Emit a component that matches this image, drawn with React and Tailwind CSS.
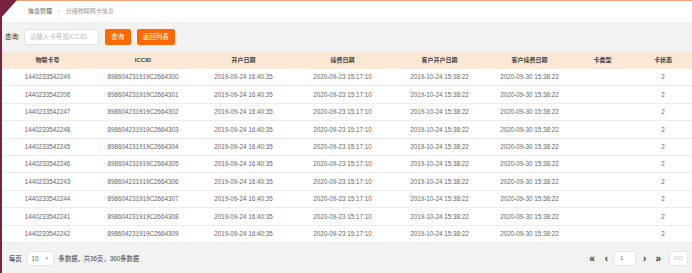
import React from "react";

const rows = [
  ["1440233542249", "898604231919C2664300"],
  ["1440233542206", "898604231919C2664301"],
  ["1440233542247", "898604231919C2664302"],
  ["1440233542248", "898604231919C2664303"],
  ["1440233542245", "898604231919C2664304"],
  ["1440233542246", "898604231919C2664305"],
  ["1440233542243", "898604231919C2664306"],
  ["1440233542244", "898604231919C2664307"],
  ["1440233542241", "898604231919C2664308"],
  ["1440233542242", "898604231919C2664309"],
];

const headers = ["物联卡号", "ICCID", "开户日期", "续费日期", "客户开户日期", "客户续费日期", "卡类型", "卡状态"];

const grid = "grid grid-cols-[91px_100px_101px_97px_97px_83px_63px_1fr]";

export default function App() {
  return (
    <div
      className="relative w-[692px] h-[273px] overflow-hidden bg-[#f2f2f2] text-[#666]"
      style={{ fontFamily: '"Liberation Sans", "Noto Sans CJK SC", sans-serif' }}
    >
      <div className="absolute left-0 top-0 h-full w-[2px] bg-[#7b2142]" />
      <div className="absolute left-0 top-0 w-0 h-0 border-t-[19px] border-r-[17px] border-t-[#7b2142] border-r-transparent" />
      <div className="flex h-full flex-col pl-[2px]">
        <div className="flex h-[22px] items-center bg-white border-t border-[#f0a070] pl-[26px] text-[6px]">
          <span className="text-[#555]">信息管理</span>
          <span className="mx-[6px] text-[#bbb]">/</span>
          <span className="text-[#999]">分组物联网卡信息</span>
        </div>
        <div className="flex h-[30px] items-center pl-[3px] text-[6.5px]">
          <span className="text-[#333]">查询:</span>
          <div className="ml-[4px] flex h-[16px] w-[75px] items-center rounded-[2px] border border-[#e2e2e2] bg-white pl-[5px] text-[#bbb]">
            请输入卡号或ICCID
          </div>
          <div className="ml-[6px] flex h-[16px] w-[26px] items-center justify-center rounded-[2px] bg-[#ff6a00] text-white">
            查询
          </div>
          <div className="ml-[6px] flex h-[16px] w-[38px] items-center justify-center rounded-[2px] bg-[#ff6a00] text-white">
            返回列表
          </div>
        </div>
        <div className={`${grid} h-[17px] items-center bg-[#fbe8d4] text-[6px] font-bold text-[#444]`}>
          {headers.map((h) => (
            <div key={h} className="text-center">{h}</div>
          ))}
        </div>
        <div className="bg-white">
          {rows.map(([a, b]) => (
            <div
              key={a}
              className={`${grid} h-[17.4px] items-center border-b border-[#ececec] text-[6.3px] text-[#666]`}
            >
              <div className="text-center">{a}</div>
              <div className="text-center">{b}</div>
              <div className="text-center">2019-09-24 16:40:35</div>
              <div className="text-center">2020-09-23 15:17:10</div>
              <div className="text-center">2019-10-24 15:38:22</div>
              <div className="text-center">2020-09-30 15:38:22</div>
              <div className="text-center"></div>
              <div className="text-center">2</div>
            </div>
          ))}
        </div>
        <div className="flex flex-1 items-center pl-[7px] pr-[4px] pt-[2px] text-[6.3px] text-[#555]">
          <span className="text-[#333]">每页</span>
          <div className="ml-[5px] flex h-[15px] w-[27px] items-center rounded-[1px] border border-[#e6e6e6] bg-white pl-[4px] text-[#666]">
            10
            <span className="ml-[6px] text-[5px] text-[#aaa]">▼</span>
          </div>
          <span className="ml-[5px] text-[#444]">条数据，共36页，360条数据</span>
          <div className="ml-auto flex items-center text-[#333]">
            <span className="text-[10px] font-bold leading-none">«</span>
            <span className="ml-[10px] text-[10px] font-bold leading-none">‹</span>
            <div className="ml-[6px] flex h-[15px] w-[22px] items-center rounded-[1px] border border-[#e6e6e6] bg-white pl-[5px] text-[6px] text-[#666]">1</div>
            <span className="ml-[7px] text-[10px] font-bold leading-none">›</span>
            <span className="ml-[9px] text-[10px] font-bold leading-none">»</span>
            <div className="ml-[8px] flex h-[15px] w-[19px] items-center justify-center rounded-[1px] border border-[#e6e6e6] bg-white text-[6px] text-[#bbb]">GO</div>
          </div>
        </div>
      </div>
    </div>
  );
}
